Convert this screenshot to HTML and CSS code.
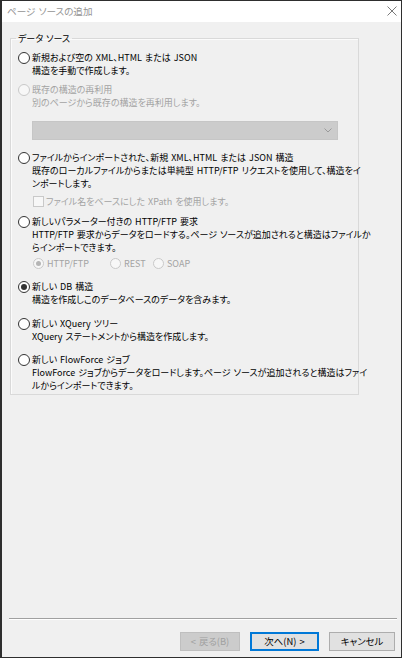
FILE: index.html
```html
<!DOCTYPE html>
<html lang="ja">
<head>
<meta charset="utf-8">
<title>ページ ソースの追加</title>
<link rel="stylesheet" href="styles.css">
</head>
<body>
<div class="window">
  <div class="titlebar">
    <span class="title">ページ ソースの追加</span>
    <svg class="close" width="10" height="10" viewBox="0 0 10 10"><path d="M0.5 0.5 L9.5 9.5 M9.5 0.5 L0.5 9.5" stroke="#7a7a7a" stroke-width="1" fill="none"/></svg>
  </div>
  <div class="content">
    <fieldset class="group">
      <legend class="legend">データ ソース</legend>

      <div class="option o1">
        <span class="radio"></span>
        <div class="text">
          <div>新規および空の XML、HTML または JSON</div>
          <div>構造を手動で作成します。</div>
        </div>
      </div>

      <div class="option o2 disabled">
        <span class="radio"></span>
        <div class="text">
          <div>既存の構造の再利用</div>
          <div>別のページから既存の構造を再利用します。</div>
        </div>
        <div class="select">
          <svg class="chev" width="8" height="5" viewBox="0 0 8 5"><path d="M0.5 0.5 L4 4 L7.5 0.5" stroke="#9a9a9a" fill="none"/></svg>
        </div>
      </div>

      <div class="option o3">
        <span class="radio"></span>
        <div class="text">
          <div>ファイルからインポートされた、新規 XML、HTML または JSON 構造</div>
          <div>既存のローカルファイルからまたは単純型 HTTP/FTP リクエストを使用して、構造をイ</div>
          <div>ンポートします。</div>
        </div>
        <div class="subrow check-row disabled">
          <span class="checkbox"></span>
          <span>ファイル名をベースにした XPath を使用します。</span>
        </div>
      </div>

      <div class="option o4">
        <span class="radio"></span>
        <div class="text">
          <div>新しいパラメーター付きの HTTP/FTP 要求</div>
          <div>HTTP/FTP 要求からデータをロードする。ページ ソースが追加されると構造はファイルか</div>
          <div>らインポートできます。</div>
        </div>
        <div class="subrow radios-row disabled">
          <span class="subradio checked"></span><span class="sublabel w1">HTTP/FTP</span>
          <span class="subradio"></span><span class="sublabel w2">REST</span>
          <span class="subradio"></span><span class="sublabel">SOAP</span>
        </div>
      </div>

      <div class="option o5">
        <span class="radio checked"></span>
        <div class="text">
          <div>新しい DB 構造</div>
          <div>構造を作成しこのデータベースのデータを含みます。</div>
        </div>
      </div>

      <div class="option o6">
        <span class="radio"></span>
        <div class="text">
          <div>新しい XQuery ツリー</div>
          <div>XQuery ステートメントから構造を作成します。</div>
        </div>
      </div>

      <div class="option o7">
        <span class="radio"></span>
        <div class="text">
          <div>新しい FlowForce ジョブ</div>
          <div>FlowForce ジョブからデータをロードします。ページ ソースが追加されると構造はファイ</div>
          <div>ルからインポートできます。</div>
        </div>
      </div>
    </fieldset>
  </div>
  <div class="footer">
    <div class="separator"></div>
    <div class="buttons">
      <button class="btn back" disabled>&lt; 戻る(B)</button>
      <button class="btn next">次へ(N) &gt;</button>
      <button class="btn cancel">キャンセル</button>
    </div>
  </div>
</div>
</body>
</html>
```

FILE: styles.css
```css
* { box-sizing: border-box; }
html, body { margin: 0; padding: 0; }
body {
  width: 402px;
  height: 658px;
  background: #f0f0f0;
  font-family: "Noto Sans CJK JP", "Noto Sans", sans-serif;
  font-feature-settings: "palt";
  font-size: 9px;
  word-spacing: 1px;
  color: #000;
}
.window {
  width: 402px;
  height: 658px;
  border: 1px solid #2e2e2e;
  border-left-width: 2px;
  display: flex;
  flex-direction: column;
  background: #f0f0f0;
}
.titlebar {
  height: 21px;
  background: #fff;
  display: flex;
  align-items: center;
  justify-content: space-between;
  padding: 0 4px 0 5px;
  flex: none;
}
.title {
  color: #949494;
  font-size: 9.6px;
  line-height: 13px;
}
.close { display: block; margin-top: -1px; }
.content {
  flex: 1;
  padding: 10px 0 0 8px;
}
.group {
  width: 349px;
  margin: 0;
  padding: 0 0 2px 7px;
  border: 1px solid #d9d9d9;
  box-shadow: inset 1px 1px 0 #fbfbfb;
  min-width: 0;
}
.legend {
  margin-left: -2px;
  padding: 0 2px;
  line-height: 13px;
}
.option {
  display: grid;
  grid-template-columns: 12px 1fr;
  column-gap: 2px;
  line-height: 13px;
  white-space: nowrap;
}
.o1 { margin-top: 6px; }
.o2 { margin-top: 6px; }
.o3 { margin-top: 11px; }
.o4 { margin-top: 7px; }
.o5 { margin-top: 10px; }
.o6 { margin-top: 11px; }
.o7 { margin-top: 10px; }
.radio {
  width: 12px;
  height: 12px;
  margin-top: 1px;
  border-radius: 50%;
  border: 1px solid #333;
  background: #fff;
  display: flex;
  align-items: center;
  justify-content: center;
}
.radio.checked::after, .subradio.checked::after {
  content: "";
  width: 6px;
  height: 6px;
  border-radius: 50%;
  background: #333;
}
.disabled { color: #a3a3a3; }
.disabled > .radio { border-color: #c9c9c9; background: #f7f7f7; }
.text { grid-column: 2; }
.select {
  grid-column: 2;
  margin-top: 12px;
  width: 306px;
  height: 19px;
  background: #cccccc;
  border: 1px solid #c6c6c6;
  display: flex;
  align-items: center;
  justify-content: flex-end;
  padding-right: 5px;
}
.subrow {
  grid-column: 2;
  display: flex;
  align-items: center;
  height: 13px;
  padding-left: 1px;
}
.check-row { margin-top: 5px; }
.radios-row { margin-top: 3px; }
.checkbox {
  width: 11px;
  height: 11px;
  border: 1px solid #c9c9c9;
  background: #f7f7f7;
  margin-right: 2px;
}
.subradio {
  width: 11px;
  height: 11px;
  border-radius: 50%;
  border: 1px solid #c9c9c9;
  background: #f7f7f7;
  display: flex;
  align-items: center;
  justify-content: center;
  margin-right: 3px;
}
.subradio.checked::after { width: 5px; height: 5px; background: #b5b5b5; }
.sublabel.w1 { width: 63px; }
.sublabel.w2 { width: 29px; }
.footer {
  flex: none;
  padding: 0 4px 6px 7px;
}
.separator {
  height: 2px;
  border-top: 1px solid #a0a0a0;
  border-bottom: 1px solid #fff;
}
.buttons {
  margin-top: 12px;
  display: flex;
  justify-content: flex-end;
  gap: 10px;
  padding-right: 2px;
}
.btn {
  height: 19px;
  padding: 0;
  font-family: inherit;
  font-feature-settings: "palt";
  font-size: 9.4px;
  word-spacing: 1px;
  line-height: 1;
  background: #e1e1e1;
  border: 1px solid #adadad;
  color: #000;
}
.back { width: 60px; background: #cccccc; border-color: #bfbfbf; color: #a0a0a0; }
.next { width: 69px; border: 2px solid #0078d7; }
.cancel { width: 66px; }
```
